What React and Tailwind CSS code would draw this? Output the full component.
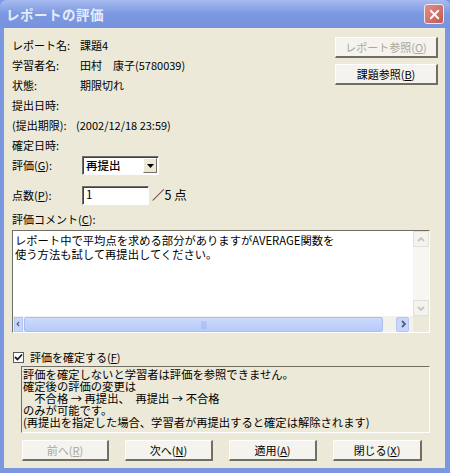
import { X } from 'lucide-react';

const FONT = "font-['Noto_Sans_CJK_JP','Noto_Sans',sans-serif]";

function XpButton({ children, disabled = false, className = '' }) {
  return (
    <div
      className={`flex items-center justify-center h-[21px] bg-[#f4f3ee] border-t border-l border-t-white border-l-white border-r-2 border-b-2 border-r-[#716f64] border-b-[#716f64] text-[11px] ${
        disabled ? 'text-[#aca899]' : 'text-black'
      } ${className}`}
    >
      {children}
    </div>
  );
}

function InfoRow({ label, children }) {
  return (
    <div className="flex items-center h-[20px]">
      <span className="w-[68px] shrink-0">{label}</span>
      <span>{children}</span>
    </div>
  );
}

function Chevron({ dir, color = '#4d6185' }) {
  const d = {
    up: 'M2 7 L5 4 L8 7',
    down: 'M2 4 L5 7 L8 4',
    left: 'M6 2 L3 5 L6 8',
    right: 'M4 2 L7 5 L4 8',
  }[dir];
  return (
    <svg width="10" height="10" viewBox="0 0 10 10">
      <path d={d} fill="none" stroke={color} strokeWidth="1.8" />
    </svg>
  );
}

export default function App() {
  return (
    <div className={`w-[450px] h-[473px] flex flex-col bg-[#7b97e0] overflow-hidden text-[11px] text-black ${FONT}`}>
      {/* title bar */}
      <div className="h-[28px] shrink-0 flex items-center justify-between pl-[6px] pr-[6px] rounded-t-[6px] bg-gradient-to-b from-[#a7bbef] via-[#7c98e0] to-[#7793df]">
        <span className="text-[13.5px] font-bold text-[#e4ecfb] tracking-[0.5px]">レポートの評価</span>
        <div className="w-[20px] h-[20px] rounded-[3px] border border-[#f3e6e6] bg-gradient-to-br from-[#e0908a] to-[#c05a50] flex items-center justify-center">
          <X className="w-[15px] h-[15px] text-white" strokeWidth={3} />
        </div>
      </div>

      {/* body */}
      <div className="flex-1 ml-[4px] mr-[5px] mb-[5px] bg-[#ece9d8] flex flex-col">
        {/* top section */}
        <div className="flex justify-between pl-[8px] pr-[7px]">
          <div className="flex flex-col pt-[7px]">
            <InfoRow label="レポート名:">課題4</InfoRow>
            <InfoRow label="学習者名:">田村　康子(5780039)</InfoRow>
            <InfoRow label="状態:">期限切れ</InfoRow>
            <InfoRow label="提出日時:" />
            <div className="flex items-center h-[20px]">
              <span className="w-[64px] shrink-0">(提出期限):</span>
              <span>(2002/12/18 23:59)</span>
            </div>
            <InfoRow label="確定日時:" />
            <div className="flex items-center h-[21px]">
              <span className="w-[70px] shrink-0">
                評価(<u>G</u>):
              </span>
              <div className="w-[77px] h-[19px] flex items-center bg-white border-t border-l border-t-[#716f64] border-l-[#716f64] border-r border-b border-r-white border-b-white shadow-[inset_1px_1px_0_#404040]">
                <span className="flex-1 pl-[3px] text-[11.5px] font-medium">再提出</span>
                <div className="w-[14px] h-[15px] mr-[1px] bg-[#ece9d8] border-t border-l border-t-white border-l-white border-r border-b border-r-[#716f64] border-b-[#716f64] flex items-center justify-center">
                  <svg width="7" height="4" viewBox="0 0 7 4">
                    <path d="M0 0 H7 L3.5 4 Z" fill="#000" />
                  </svg>
                </div>
              </div>
            </div>
            <div className="flex items-center h-[20px] mt-[9px]">
              <span className="w-[70px] shrink-0">
                点数(<u>P</u>):
              </span>
              <div className="w-[67px] h-[19px] flex items-center bg-white border-t border-l border-t-[#716f64] border-l-[#716f64] border-r border-b border-r-white border-b-white shadow-[inset_1px_1px_0_#404040] pl-[3px] text-[11.5px]">
                1
              </div>
              <span className="ml-[3px] text-[12.5px]">／5 点</span>
            </div>
            <div className="flex items-center h-[20px] mt-[4px]">
              評価コメント(<u>C</u>):
            </div>
          </div>
          <div className="flex flex-col w-[103px] pt-[9px] gap-[6px]">
            <XpButton disabled>
              レポート参照(<u>O</u>)
            </XpButton>
            <XpButton>
              課題参照(<u>B</u>)
            </XpButton>
          </div>
        </div>

        {/* comment box */}
        <div className="ml-[8px] mr-[15px] mt-[1px] h-[103px] flex border-t border-l border-t-[#716f64] border-l-[#716f64] border-r border-b border-r-white border-b-white bg-white">
          <div className="flex-1 flex flex-col">
            <div className="flex-1 pl-[2px] pt-[2px] text-[11.3px] leading-[14px] whitespace-pre-line">
              {'レポート中で平均点を求める部分がありますがAVERAGE関数を\n使う方法も試して再提出してください。'}
            </div>
            <div className="h-[16px] flex items-center bg-[#f3f1ec]">
              <div className="w-[9px] h-[15px] ml-[1px] bg-[#c8d6fb] border border-[#b3c6f3] flex items-center justify-center">
                <Chevron dir="left" />
              </div>
              <div className="flex-1 h-[15px] mx-[1px] bg-gradient-to-b from-[#cbdafd] to-[#b7cbf8] border border-[#a9bff1] rounded-[2px] flex items-center justify-center">
                <span className="text-[7px] text-[#8ea4da] tracking-[-0.5px]">||||</span>
              </div>
              <div className="w-[13px] h-[15px] ml-[12px] mr-[4px] bg-[#c8d6fb] border border-[#b3c6f3] rounded-[2px] flex items-center justify-center">
                <Chevron dir="right" />
              </div>
            </div>
          </div>
          <div className="w-[16px] flex flex-col bg-[#f7f6f1]">
            <div className="h-[16px] border border-[#e3e1d6] bg-[#f4f3ee] flex items-center justify-center">
              <Chevron dir="up" color="#c9c7ba" />
            </div>
            <div className="flex-1" />
            <div className="h-[16px] border border-[#e3e1d6] bg-[#f4f3ee] flex items-center justify-center">
              <Chevron dir="down" color="#c9c7ba" />
            </div>
            <div className="h-[16px] bg-[#ece9d8]" />
          </div>
        </div>

        {/* confirm checkbox */}
        <div className="flex items-center h-[14px] mt-[17px] pl-[9px] gap-[6px]">
          <div className="w-[11px] h-[11px] bg-white border border-[#5a5a5a] flex items-center justify-center">
            <svg width="9" height="9" viewBox="0 0 9 9">
              <path d="M1 4 L3.5 6.5 L8 1.5" fill="none" stroke="#1a1a1a" strokeWidth="1.8" />
            </svg>
          </div>
          <span>
            評価を確定する(<u>F</u>)
          </span>
        </div>

        {/* info box */}
        <div className="ml-[17px] mr-[15px] mt-[2px] h-[67px] border-t border-l border-t-[#716f64] border-l-[#716f64] border-r border-b border-r-white border-b-white pl-[1px] pt-[1px] leading-[12px] text-[11.3px] whitespace-pre">
          {'評価を確定しないと学習者は評価を参照できません。\n確定後の評価の変更は\n　不合格 → 再提出、　再提出 → 不合格\nのみが可能です。\n(再提出を指定した場合、学習者が再提出すると確定は解除されます)'}
        </div>

        {/* bottom buttons */}
        <div className="flex mt-[7px] pl-[18px] gap-[16px]">
          <XpButton disabled className="w-[87px]">
            前へ(<u>R</u>)
          </XpButton>
          <XpButton className="w-[88px]">
            次へ(<u>N</u>)
          </XpButton>
          <XpButton className="w-[88px]">
            適用(<u>A</u>)
          </XpButton>
          <XpButton className="w-[89px]">
            閉じる(<u>X</u>)
          </XpButton>
        </div>
      </div>
    </div>
  );
}
